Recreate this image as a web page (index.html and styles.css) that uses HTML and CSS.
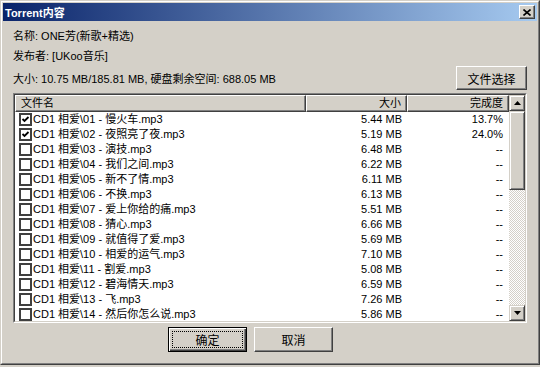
FILE: index.html
```html
<!DOCTYPE html>
<html lang="zh-CN">
<head>
<meta charset="UTF-8">
<title>Torrent内容</title>
<link rel="stylesheet" href="styles.css">
</head>
<body>
<div class="window">
<div class="frame">
    <div class="titlebar">
        <span class="title">Torrent内容</span>
        <button class="close" type="button">
            <svg width="8" height="7" viewBox="0 0 8 7"><path d="M0.5 0.5 L7.5 6.5 M7.5 0.5 L0.5 6.5" stroke="#000" stroke-width="1.6"/></svg>
        </button>
    </div>

    <div class="content">
        <div class="info">名称: ONE芳(新歌+精选)</div>
        <div class="info">发布者: [UKoo音乐]</div>
        <div class="info-row">
            <span>大小: 10.75 MB/185.81 MB, 硬盘剩余空间: 688.05 MB</span>
            <button class="btn btn-select" type="button">文件选择</button>
        </div>

        <div class="listbox">
            <div class="list-inner">
                <div class="list-main">
                    <div class="list-head">
                        <div class="col-head">文件名</div>
                        <div class="col-head right">大小</div>
                        <div class="col-head right">完成度</div>
                    </div>
                    <div class="rows">
                        <div class="row"><div class="name"><span class="check on"><svg width="9" height="9" viewBox="0 0 9 9"><polyline points="1.5,4 3.5,6 7.5,2" fill="none" stroke="#000" stroke-width="1.8"/></svg></span>CD1 相爱\01 - 慢火车.mp3</div><div class="num">5.44 MB</div><div class="num done">13.7%</div></div>
                        <div class="row"><div class="name"><span class="check on"><svg width="9" height="9" viewBox="0 0 9 9"><polyline points="1.5,4 3.5,6 7.5,2" fill="none" stroke="#000" stroke-width="1.8"/></svg></span>CD1 相爱\02 - 夜照亮了夜.mp3</div><div class="num">5.19 MB</div><div class="num done">24.0%</div></div>
                        <div class="row"><div class="name"><span class="check"></span>CD1 相爱\03 - 演技.mp3</div><div class="num">6.48 MB</div><div class="num done">--</div></div>
                        <div class="row"><div class="name"><span class="check"></span>CD1 相爱\04 - 我们之间.mp3</div><div class="num">6.22 MB</div><div class="num done">--</div></div>
                        <div class="row"><div class="name"><span class="check"></span>CD1 相爱\05 - 新不了情.mp3</div><div class="num">6.11 MB</div><div class="num done">--</div></div>
                        <div class="row"><div class="name"><span class="check"></span>CD1 相爱\06 - 不换.mp3</div><div class="num">6.13 MB</div><div class="num done">--</div></div>
                        <div class="row"><div class="name"><span class="check"></span>CD1 相爱\07 - 爱上你给的痛.mp3</div><div class="num">5.51 MB</div><div class="num done">--</div></div>
                        <div class="row"><div class="name"><span class="check"></span>CD1 相爱\08 - 猜心.mp3</div><div class="num">6.66 MB</div><div class="num done">--</div></div>
                        <div class="row"><div class="name"><span class="check"></span>CD1 相爱\09 - 就值得了爱.mp3</div><div class="num">5.69 MB</div><div class="num done">--</div></div>
                        <div class="row"><div class="name"><span class="check"></span>CD1 相爱\10 - 相爱的运气.mp3</div><div class="num">7.10 MB</div><div class="num done">--</div></div>
                        <div class="row"><div class="name"><span class="check"></span>CD1 相爱\11 - 割爱.mp3</div><div class="num">5.08 MB</div><div class="num done">--</div></div>
                        <div class="row"><div class="name"><span class="check"></span>CD1 相爱\12 - 碧海情天.mp3</div><div class="num">6.59 MB</div><div class="num done">--</div></div>
                        <div class="row"><div class="name"><span class="check"></span>CD1 相爱\13 - 飞.mp3</div><div class="num">7.26 MB</div><div class="num done">--</div></div>
                        <div class="row"><div class="name"><span class="check"></span>CD1 相爱\14 - 然后你怎么说.mp3</div><div class="num">5.86 MB</div><div class="num done">--</div></div>
                    </div>
                </div>
                <div class="scrollbar">
                    <div class="sb-btn"><svg width="7" height="4" viewBox="0 0 7 4"><path d="M3.5 0 L7 4 L0 4 Z" fill="#000"/></svg></div>
                    <div class="sb-thumb"></div>
                    <div class="sb-track"></div>
                    <div class="sb-btn"><svg width="7" height="4" viewBox="0 0 7 4"><path d="M0 0 L7 0 L3.5 4 Z" fill="#000"/></svg></div>
                </div>
            </div>
        </div>

        <div class="actions">
            <button class="btn btn-default" type="button"><span class="focus">确定</span></button>
            <button class="btn" type="button">取消</button>
        </div>
    </div>
</div>
</div>
</body>
</html>
```
FILE: styles.css
```css
body {
    margin: 0;
    background-color: #d4d0c8;
    font-family: "Liberation Sans", "Noto Sans CJK SC", sans-serif;
    font-size: 11px;
    color: #000;
}
.window {
    width: 540px;
    height: 365px;
    box-sizing: border-box;
    border: 1px solid;
    border-color: #d4d0c8 #404040 #404040 #d4d0c8;
}
.frame {
    height: 100%;
    box-sizing: border-box;
    border: 1px solid;
    border-color: #fff #808080 #808080 #fff;
    padding: 1px;
    display: flex;
    flex-direction: column;
}
.titlebar {
    height: 18px;
    display: flex;
    align-items: center;
    padding-left: 2px;
    background: linear-gradient(to right, #0a246a, #a6caf0);
    color: #fff;
    font-weight: bold;
}
.close {
    margin-left: auto;
    margin-right: 2px;
    width: 16px;
    height: 14px;
    padding: 0;
    display: flex;
    align-items: center;
    justify-content: center;
    background-color: #d4d0c8;
    border: 1px solid;
    border-color: #fff #404040 #404040 #fff;
    box-shadow: inset -1px -1px #808080;
}
.content {
    padding: 5px 10px 0;
}
.info {
    height: 20px;
    line-height: 20px;
}
.info-row {
    height: 24px;
    display: flex;
    align-items: center;
    justify-content: space-between;
}
.btn {
    font-family: inherit;
    font-size: 12px;
    color: #000;
    background-color: #d4d0c8;
    border: 1px solid;
    border-color: #fff #404040 #404040 #fff;
    box-shadow: inset -1px -1px #808080;
    padding: 0;
    width: 79px;
    height: 25px;
}
.btn-select {
    width: 71px;
    height: 24px;
}
.listbox {
    margin-top: 3px;
    height: 230px;
    box-sizing: border-box;
    border: 1px solid;
    border-color: #808080 #fff #fff #808080;
}
.list-inner {
    height: 100%;
    box-sizing: border-box;
    border: 1px solid;
    border-color: #404040 #d4d0c8 #d4d0c8 #404040;
    display: flex;
}
.list-main {
    flex: 1;
    background-color: #fff;
    overflow: hidden;
}
.list-head, .row {
    display: grid;
    grid-template-columns: 291px 101px 102px;
}
.col-head {
    height: 17px;
    box-sizing: border-box;
    line-height: 15px;
    padding: 0 5px;
    background-color: #d4d0c8;
    border: 1px solid;
    border-color: #fff #404040 #404040 #fff;
    box-shadow: inset -1px -1px #808080;
}
.right {
    text-align: right;
}
.row {
    height: 15px;
    line-height: 15px;
}
.name {
    display: flex;
    align-items: center;
    white-space: nowrap;
}
.check {
    width: 13px;
    height: 13px;
    box-sizing: border-box;
    margin: 0 1px 0 4px;
    border: 2px solid #404040;
    display: flex;
    align-items: center;
    justify-content: center;
}
.num {
    text-align: right;
    padding-right: 5px;
}
.done {
    padding-right: 6px;
}
.scrollbar {
    width: 16px;
    display: flex;
    flex-direction: column;
}
.sb-btn, .sb-thumb {
    box-sizing: border-box;
    background-color: #d4d0c8;
    border: 1px solid;
    border-color: #d4d0c8 #404040 #404040 #d4d0c8;
    box-shadow: inset 1px 1px #fff, inset -1px -1px #808080;
}
.sb-btn {
    height: 16px;
    display: flex;
    align-items: center;
    justify-content: center;
}
.sb-thumb {
    height: 79px;
}
.sb-track {
    flex: 1;
    background: repeating-conic-gradient(#d4d0c8 0 25%, #fff 0 50%) 0 0 / 2px 2px;
}
.actions {
    margin-top: 4px;
    padding-left: 155px;
    display: flex;
    gap: 7px;
}
.btn-default {
    border: 1px solid #000;
    box-shadow: inset 1px 1px #fff, inset -1px -1px #404040, inset -2px -2px #808080;
    padding: 3px;
}
.focus {
    display: flex;
    align-items: center;
    justify-content: center;
    height: 100%;
    box-sizing: border-box;
    border: 1px dotted #000;
}
```
